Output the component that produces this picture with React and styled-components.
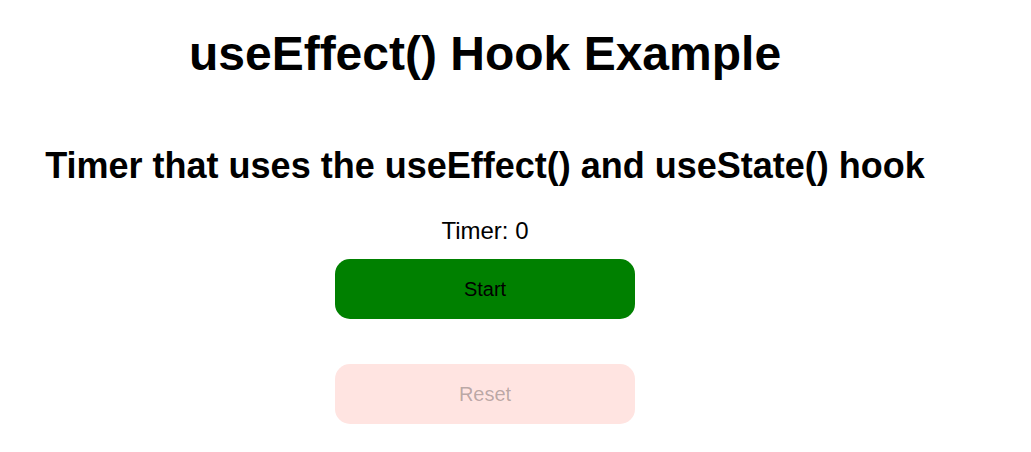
import styled, { createGlobalStyle } from "styled-components";
import { useEffect, useState } from "react";

const GlobalStyle = createGlobalStyle`
  html, body {
    margin: 0;
    padding: 0;
    background: #ffffff;
  }
  body {
    font-family: "Liberation Sans", Arial, sans-serif;
    color: #000000;
  }
`;

const Page = styled.div`
  width: 970px;
  display: flex;
  flex-direction: column;
  align-items: center;
  text-align: center;
`;

const Title = styled.h1`
  margin: 26px 0 0 0;
  font-size: 48px;
  font-weight: bold;
  line-height: 55px;
`;

const Subtitle = styled.h2`
  margin: 64px 0 0 0;
  font-size: 36px;
  font-weight: bold;
  line-height: 41px;
`;

const TimerText = styled.p`
  margin: 31px 0 0 0;
  font-size: 24px;
  line-height: 28px;
`;

const Button = styled.button`
  width: 300px;
  height: 60px;
  margin-top: ${(props) => props.gap}px;
  border: none;
  border-radius: 15px;
  font-family: "Liberation Sans", Arial, sans-serif;
  font-size: 20px;
  background-color: ${(props) => props.bg};
  color: #000000;
  cursor: pointer;

  &:disabled {
    color: rgba(16, 16, 16, 0.3);
    cursor: default;
  }
`;

const App = () => {
  const [count, setCount] = useState(0);
  const [running, setRunning] = useState(false);

  useEffect(() => {
    if (!running) return;
    const id = setInterval(() => setCount((c) => c + 1), 1000);
    return () => clearInterval(id);
  }, [running]);

  return (
    <>
      <GlobalStyle />
      <Page>
        <Title>useEffect() Hook Example</Title>
        <Subtitle>Timer that uses the useEffect() and useState() hook</Subtitle>
        <TimerText>Timer: {count}</TimerText>
        <Button gap={14} bg="#008000" onClick={() => setRunning(!running)}>
          {running ? "Stop" : "Start"}
        </Button>
        <Button
          gap={45}
          bg="#ffe4e1"
          disabled={count === 0}
          onClick={() => {
            setRunning(false);
            setCount(0);
          }}
        >
          Reset
        </Button>
      </Page>
    </>
  );
};

export default App;
